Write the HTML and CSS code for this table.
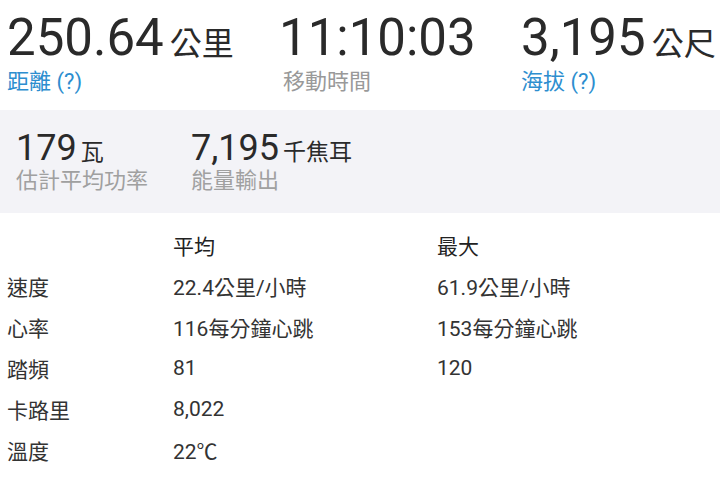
FILE: index.html
```html
<!DOCTYPE html>
<html lang="zh-Hant">
<head>
    <meta charset="UTF-8">
    <meta name="viewport" content="width=device-width, initial-scale=1.0">
    <title>活動統計</title>
    <link rel="stylesheet" href="styles.css">
</head>
<body>

    <div class="summary">
        <div class="stat stat-distance">
            <div class="stat-value">250.64<span class="unit">公里</span></div>
            <div class="stat-label link">距離 (?)</div>
        </div>
        <div class="stat stat-time">
            <div class="stat-value">11:10:03</div>
            <div class="stat-label">移動時間</div>
        </div>
        <div class="stat">
            <div class="stat-value">3,195<span class="unit">公尺</span></div>
            <div class="stat-label link">海拔 (?)</div>
        </div>
    </div>

    <div class="extra">
        <div class="extra-item extra-power">
            <div class="extra-value">179<span class="unit">瓦</span></div>
            <div class="extra-label">估計平均功率</div>
        </div>
        <div class="extra-item">
            <div class="extra-value">7,195<span class="unit">千焦耳</span></div>
            <div class="extra-label">能量輸出</div>
        </div>
    </div>

    <div class="details">
        <div></div>
        <div class="head">平均</div>
        <div class="head">最大</div>

        <div>速度</div>
        <div>22.4公里/小時</div>
        <div>61.9公里/小時</div>

        <div>心率</div>
        <div>116每分鐘心跳</div>
        <div>153每分鐘心跳</div>

        <div>踏頻</div>
        <div>81</div>
        <div>120</div>

        <div>卡路里</div>
        <div>8,022</div>
        <div></div>

        <div>溫度</div>
        <div>22℃</div>
        <div></div>
    </div>

</body>
</html>
```

FILE: styles.css
```css
body {
    margin: 0;
    font-family: Roboto, "Noto Sans CJK TC", sans-serif;
    color: #333;
    background-color: white;
    overflow: hidden;
}

/* top row of big numbers */
.summary {
    display: flex;
    padding: 8px 7px 0 7px;
    height: 102px;
}

.stat {
    flex-shrink: 0;
}

.stat-distance {
    width: 272px;
}

.stat-time {
    width: 242px;
}

.stat-time .stat-label {
    padding-left: 4px;
}

.stat-value {
    height: 60px;
    font-size: 51px;
    line-height: 60px;
    color: #2a2a2a;
    white-space: nowrap;
}

.stat-value .unit {
    font-size: 32px;
    line-height: 1;
    margin-left: 6px;
}

.stat-label {
    font-size: 22px;
    line-height: 28px;
    color: #999;
}

.stat-label.link {
    color: #2d8ecf;
}

/* grey band */
.extra {
    display: flex;
    background-color: #f3f3f7;
    padding: 17px 16px 0 16px;
    height: 86px;
}

.extra-power {
    width: 175px;
}

.extra-value {
    height: 40px;
    font-size: 36px;
    line-height: 42px;
    color: #2a2a2a;
}

.extra-value .unit {
    font-size: 23px;
    line-height: 1;
    margin-left: 4px;
}

.extra-label {
    font-size: 22px;
    line-height: 28px;
    color: #a0a0a0;
}

/* averages table */
.details {
    display: grid;
    grid-template-columns: 166px 264px 1fr;
    grid-auto-rows: 41px;
    align-items: center;
    padding: 11px 7px 0 7px;
    font-size: 21px;
    color: #333;
}

.details .head {
    color: #222;
}
```
